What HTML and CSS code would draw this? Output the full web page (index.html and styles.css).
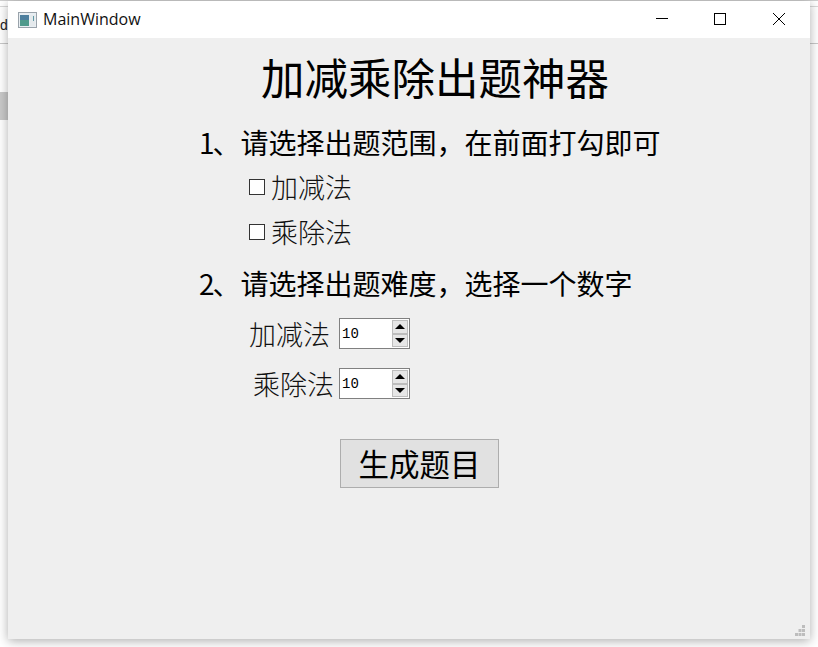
FILE: index.html
```html
<!DOCTYPE html>
<html lang="zh-CN">
<head>
<meta charset="utf-8">
<title>MainWindow</title>
<link rel="stylesheet" href="styles.css">
</head>
<body>
<div class="desktop">
  <div class="bg-top-line"></div>
  <div class="bg-line"></div>
  <div class="bg-letter">d</div>
  <div class="bg-block"></div>
  <div class="window">
    <header class="titlebar">
      <svg class="app-icon" width="20" height="16" viewBox="0 0 20 16">
        <rect x="0.5" y="0.5" width="18" height="15" fill="#e8eef2" stroke="#9aa3ab"/>
        <rect x="2" y="3" width="9" height="11" fill="#4f9a8c"/>
        <rect x="2" y="3" width="9" height="5" fill="#4d7f9e"/>
        <rect x="12" y="3" width="5" height="11" fill="#e4e9ec"/>
        <rect x="15" y="4" width="1" height="5" fill="#5f9aa6"/>
      </svg>
      <span class="title-text">MainWindow</span>
      <div class="controls">
        <svg class="ctl" width="59" height="37" viewBox="0 0 59 37"><path d="M22 17.500H34" stroke="#000" fill="none"/></svg>
        <svg class="ctl" width="59" height="37" viewBox="0 0 59 37"><rect x="21.500" y="12.500" width="11" height="11" stroke="#000" fill="none"/></svg>
        <svg class="ctl" width="58" height="37" viewBox="0 0 58 37"><path d="M21 12L33 24M33 12L21 24" stroke="#000" fill="none"/></svg>
      </div>
    </header>
    <main class="content">
      <h1 class="heading">加减乘除出题神器</h1>
      <p class="step step-one"><span class="num">1</span>、请选择出题范围&#xFF0C;在前面打勾即可</p>
      <label class="check-row check-first"><span class="box"></span><span class="serif-label">加减法</span></label>
      <label class="check-row check-second"><span class="box"></span><span class="serif-label">乘除法</span></label>
      <p class="step step-two"><span class="num">2</span>、请选择出题难度&#xFF0C;选择一个数字</p>
      <div class="spin-row spin-first">
        <span class="serif-label">加减法</span>
        <div class="spin">
          <span class="spin-value">10</span>
          <div class="spin-btns">
            <span class="spin-btn"><i class="arrow-up"></i></span>
            <span class="spin-btn"><i class="arrow-down"></i></span>
          </div>
        </div>
      </div>
      <div class="spin-row spin-second">
        <span class="serif-label">乘除法</span>
        <div class="spin">
          <span class="spin-value">10</span>
          <div class="spin-btns">
            <span class="spin-btn"><i class="arrow-up"></i></span>
            <span class="spin-btn"><i class="arrow-down"></i></span>
          </div>
        </div>
      </div>
      <button class="generate" type="button">生成题目</button>
      <svg class="grip" width="11" height="11" viewBox="0 0 11 11">
        <path d="M7 0h3v3H7zM3.500 4h3v3h-3zM7 4h3v3H7zM0 8h3v3H0zM3.500 8h3v3h-3zM7 8h3v3H7z" fill="#bdbdbd"/>
      </svg>
    </main>
  </div>
</div>
</body>
</html>
```
FILE: styles.css
```css
* { box-sizing: border-box; }
html, body { margin: 0; padding: 0; }
body {
  width: 818px;
  height: 647px;
  overflow: hidden;
  background: #fff;
  font-family: "Noto Sans CJK SC", "Noto Sans", sans-serif;
}
.desktop { position: relative; width: 818px; height: 647px; overflow: hidden; }
.bg-top-line { position: absolute; left: 0; top: 0; width: 818px; height: 1px; background: #cfcfcf; }
.bg-line { position: absolute; left: 0; top: 6px; width: 818px; height: 38px; border-top: 1px solid #d8d8d8; border-bottom: 1px solid #c8c8c8; }
.bg-letter { position: absolute; left: 0; top: 14px; font: 14px/22px "Liberation Sans", sans-serif; color: #222; }
.bg-block { position: absolute; left: 0; top: 92px; width: 8px; height: 28px; background: #c9c9c9; }
.window {
  position: absolute;
  left: 8px;
  top: 1px;
  width: 802px;
  height: 638px;
  display: flex;
  flex-direction: column;
  background: #efefef;
  box-shadow: 0 2px 10px rgba(0, 0, 0, 0.32);
}
.titlebar { display: flex; align-items: center; height: 37px; flex: none; background: #fff; padding-left: 10px; }
.app-icon { flex: none; }
.title-text { margin-left: 5px; margin-top: -2px; font: 16px "Open Sans", "Liberation Sans", sans-serif; color: #111; }
.controls { margin-left: auto; display: flex; align-items: flex-start; height: 37px; }
.ctl { display: block; }
.content { position: relative; flex: 1; display: flex; flex-direction: column; align-items: flex-start; padding-left: 191px; }
.heading {
  margin: 10px 0 0 62px;
  font-size: 43.5px;
  line-height: 58px;
  font-weight: 400;
  color: #000;
  white-space: nowrap;
}
.step { margin: 0; font-size: 28px; line-height: 38px; color: #000; white-space: nowrap; }
.num { letter-spacing: -2px; }
.step-one { margin-top: 17px; }
.step-two { margin-top: 13px; }
.check-row { display: flex; align-items: center; margin-left: 50px; height: 38px; }
.check-first { margin-top: 7px; }
.check-second { margin-top: 7px; }
.box { width: 16px; height: 16px; border: 1px solid #333; background: #fff; flex: none; margin-right: 6px; }
.serif-label { font-size: 27px; line-height: 36px; font-weight: 300; color: #111; white-space: nowrap; }
.spin-row { display: flex; align-items: center; justify-content: flex-end; width: 211px; height: 31px; }
.spin-first { margin-top: 16px; gap: 9px; }
.spin-second { margin-top: 19px; gap: 5px; }
.spin {
  display: flex;
  align-items: stretch;
  justify-content: space-between;
  width: 71px;
  height: 31px;
  flex: none;
  background: #fff;
  border: 1px solid #808080;
  padding: 1px;
}
.spin-value { font: 14px/29px "Liberation Mono", monospace; padding-left: 1px; color: #000; }
.spin-btns { display: flex; flex-direction: column; width: 16px; }
.spin-btn { flex: 1; display: flex; align-items: center; justify-content: center; background: #e6e6e6; border: 1px solid #bdbdbd; }
.arrow-up { width: 0; height: 0; border-left: 5px solid transparent; border-right: 5px solid transparent; border-bottom: 5px solid #000; }
.arrow-down { width: 0; height: 0; border-left: 5px solid transparent; border-right: 5px solid transparent; border-top: 5px solid #000; }
.generate {
  margin: 40px 0 0 141px;
  width: 159px;
  height: 49px;
  padding: 0;
  background: #e1e1e1;
  border: 1px solid #adadad;
  font-family: inherit;
  font-size: 30.5px;
  line-height: 47px;
  color: #000;
}
.grip { position: absolute; right: 4px; bottom: 3px; }
```
